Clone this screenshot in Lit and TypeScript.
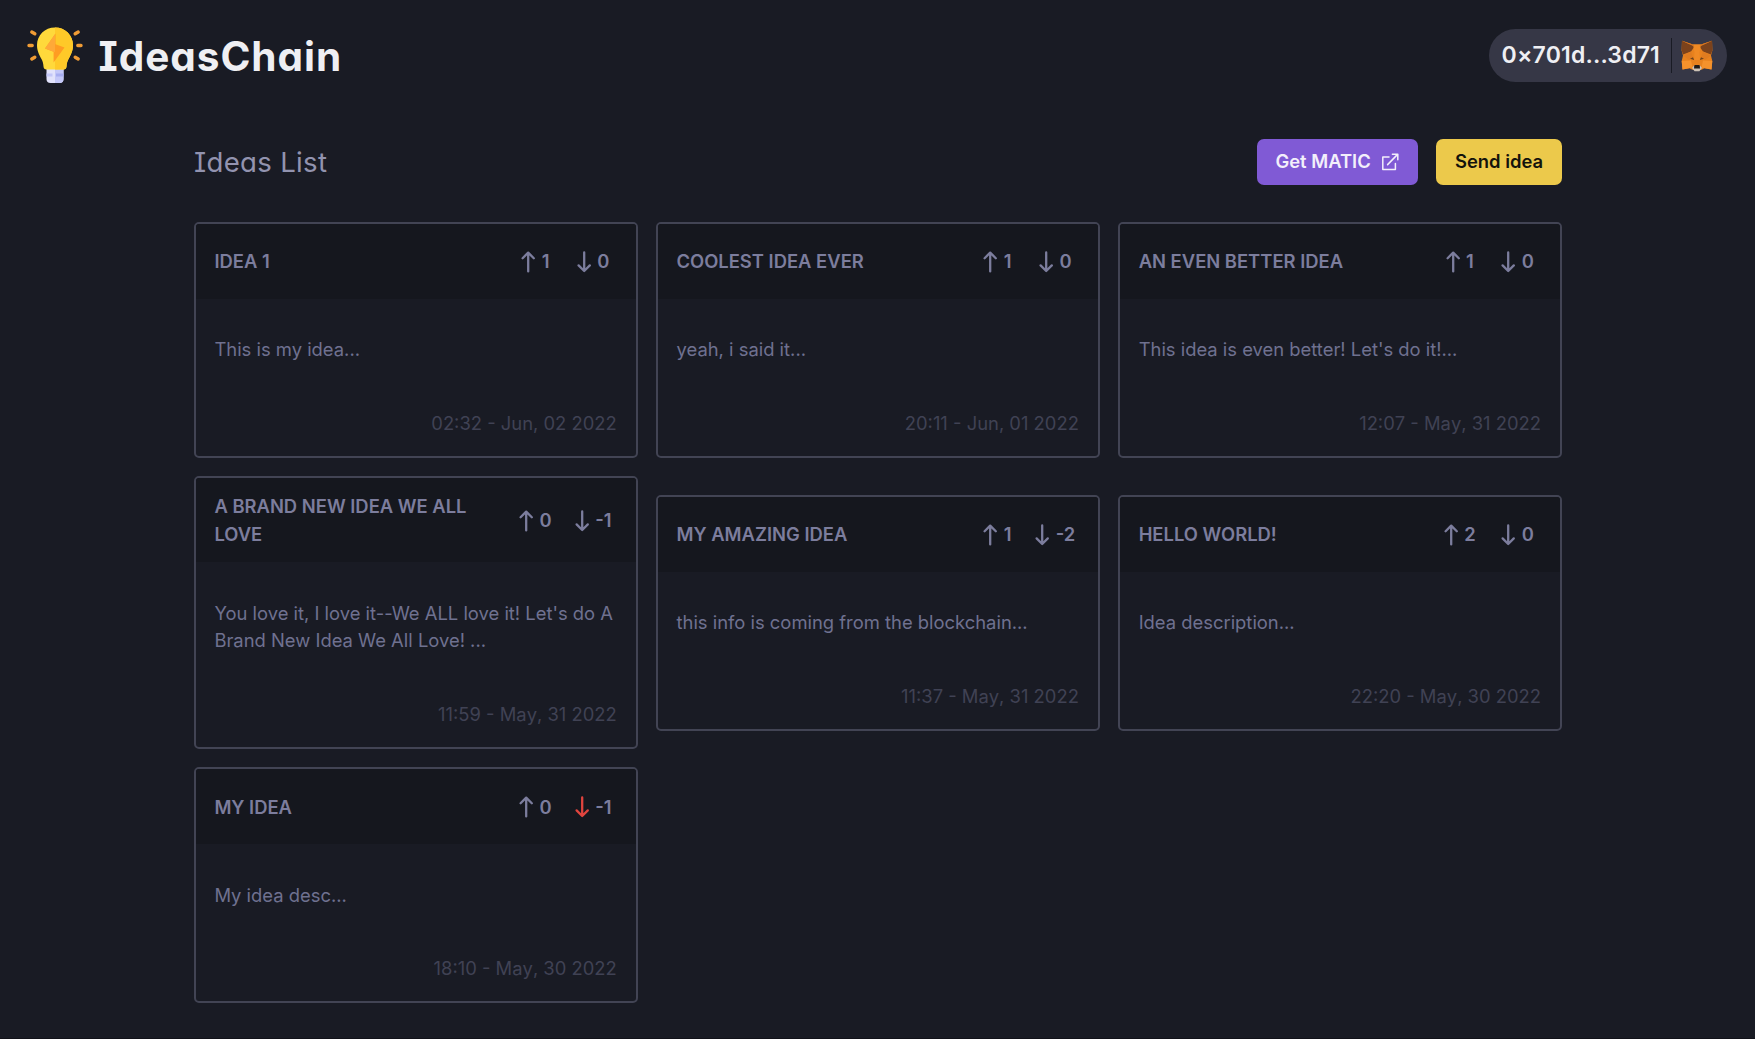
import { LitElement, html, css, svg } from "lit";
import { customElement, property } from "lit/decorators.js";
import { classMap } from "lit/directives/class-map.js";

interface Idea {
  title: string;
  text: string;
  up: number;
  down: number;
  date: string;
  downvoted?: boolean;
}

const IDEAS: Idea[] = [
  { title: "Idea 1", text: "This is my idea...", up: 1, down: 0, date: "02:32 - Jun, 02 2022" },
  { title: "Coolest idea ever", text: "yeah, i said it...", up: 1, down: 0, date: "20:11 - Jun, 01 2022" },
  { title: "An even better idea", text: "This idea is even better! Let's do it!...", up: 1, down: 0, date: "12:07 - May, 31 2022" },
  { title: "A brand new idea we all love", text: "You love it, I love it--We ALL love it! Let's do A Brand New Idea We All Love! ...", up: 0, down: -1, date: "11:59 - May, 31 2022" },
  { title: "My amazing idea", text: "this info is coming from the blockchain...", up: 1, down: -2, date: "11:37 - May, 31 2022" },
  { title: "Hello world!", text: "Idea description...", up: 2, down: 0, date: "22:20 - May, 30 2022" },
  { title: "My idea", text: "My idea desc...", up: 0, down: -1, date: "18:10 - May, 30 2022", downvoted: true },
];

const arrow = (d: string) => svg`<path d=${d} fill="none" stroke="currentColor" stroke-width="2.3" stroke-linecap="round" stroke-linejoin="round"/>`;
const ARROW_UP = "M9.2 20.4V1.8M3.6 7.2L9.2 1.600L14.800 7.200";
const ARROW_DOWN = "M9.200 1.400V19.800M3.600 14.400L9.200 20L14.800 14.400";

@customElement("idea-card")
export class IdeaCard extends LitElement {
  @property({ attribute: false }) idea!: Idea;

  static styles = css`
    :host { display: block; box-sizing: border-box; border: 2px solid #424454; border-radius: 5px; overflow: hidden; }
    .head { display: flex; align-items: center; justify-content: space-between; box-sizing: border-box;
      padding: 15px 20.5px 14px 18.4px; background: #15171e; color: #7c7d9d; font-weight: 560; }
    .title { flex: 1; text-transform: uppercase; }
    .votes { display: flex; gap: 11.8px; }
    .vote { display: flex; align-items: center; justify-content: center; gap: 4px; width: 46px; height: 46px; }
    .vote svg { flex: none; width: 18.4px; height: 22px; }
    .active svg { color: #e0443e; }
    .text { padding: 37.3px 18.4px 0; color: #6f7190; }
    .date { padding: 46px 19px 18.4px; text-align: right; color: #404254; font-kerning: none; }
  `;

  render() {
    const { title, text, up, down, date, downvoted } = this.idea;
    return html`
      <div class="head">
        <div class="title">${title}</div>
        <div class="votes">
          <div class="vote"><svg viewBox="0 0 18.4 22">${arrow(ARROW_UP)}</svg><span>${up}</span></div>
          <div class=${classMap({ vote: true, active: !!downvoted })}>
            <svg viewBox="0 0 18.4 22">${arrow(ARROW_DOWN)}</svg><span>${down}</span>
          </div>
        </div>
      </div>
      <div class="text">${text}</div>
      <div class="date">${date}</div>
    `;
  }
}

@customElement("app-root")
export class AppRoot extends LitElement {
  static styles = css`
    :host { display: block; box-sizing: border-box; min-height: 1039px; background: #191b24; overflow: hidden;
      border-bottom: 1px solid #111219; font: 400 18.4px/27.6px Inter, "Liberation Sans", sans-serif; }
    .top { display: flex; align-items: center; justify-content: space-between; padding: 27.5px 28px 0 27px; height: 56px; }
    .brand { display: flex; align-items: center; gap: 15.5px; }
    .brand svg { width: 56px; height: 57px; }
    .name { padding-top: 2.5px; font-size: 40.5px; line-height: 56px; font-weight: 700; letter-spacing: 0.95px; color: #efeff3;
      font-feature-settings: "cv08", "cv11"; }
    .wallet { display: flex; align-items: center; box-sizing: border-box; height: 53px; padding: 0 14px 0 13px;
      border-radius: 27px; background: #363746; color: #efeff3; font-size: 23px; font-weight: 600; }
    .addr { letter-spacing: 0.17px; }
    .sep { width: 1px; height: 35px; margin: 0 9.5px 0 10.5px; background: #191b24; }
    .wallet svg { width: 32px; height: 32px; margin-top: 1px; }
    .main { width: 1368px; margin: 0 auto; padding: 55px 0 0 1px; }
    .bar { display: flex; align-items: center; gap: 18.4px; height: 46px; }
    .heading { flex: 1; font-size: 27.6px; line-height: 46px; letter-spacing: 0.3px; color: #9293af;
      font-feature-settings: "cv08", "cv11"; }
    .btn { display: flex; align-items: center; gap: 10px; height: 46px; padding: 0 18.4px; border-radius: 7px;
      font-weight: 600; color: #f3effb; background: #805ad5; }
    .btn svg { width: 18px; height: 18px; margin-right: 0.8px; }
    .yellow { padding: 0 18.9px 0 18.7px; background: #ecc94b; color: #14130c; }
    .grid { display: grid; grid-template-columns: repeat(3, 1fr); gap: 18.4px; align-items: center; padding-top: 37.5px; }
  `;

  render() {
    return html`
      <header class="top">
        <div class="brand">
          <svg viewBox="0 0 56 57">
            <g stroke="#f09c35" stroke-width="3.4" stroke-linecap="round">
              <path d="M2 18.500h3.200M50.800 18.500h3.200M4.800 5l3 1.800M51.200 5l-3 1.800M4.800 32l3-1.800M51.200 32l-3-1.800"/>
            </g>
            <path d="M19.500 42h17v10q0 4-4 4h-9q-4 0-4-4z" fill="#e1e2fb"/>
            <path d="M28 42h8.500v10q0 4-4 4H28z" fill="#c3c7f8"/>
            <path d="M19.500 46.500h6v3h-6z" fill="#c3c7f8"/><path d="M29 46.500h7.500v3H29z" fill="#a7adf0"/>
            <path d="M28 .5C17.800 .5 10 8.300 10 18c0 6 2.300 10 4.600 14.300 1.300 2.500 1.700 4.500 1.900 7.200.1 2 1.200 3 3 3h17c1.800 0 2.900-1 3-3 .2-2.700.6-4.700 1.900-7.200C43.700 28 46 24 46 18 46 8.300 38.200.5 28 .5z" fill="#ffd93b"/>
            <path d="M28 .5v42h8.500c1.800 0 2.900-1 3-3 .2-2.700.6-4.700 1.900-7.200C43.700 28 46 24 46 18 46 8.300 38.200.5 28 .5z" fill="#ffc928"/>
            <path d="M28.500 6.500L18 21.500l8.600 3.300V35.500L37.500 20.500l-9-3.300z" fill="#ff9c22"/>
            <path d="M28.500 6.500L18 21.500l10 3.700V7z" fill="#ffa938"/>
          </svg>
          <div class="name">IdeasChain</div>
        </div>
        <div class="wallet">
          <span class="addr">0×701d...3d71</span>
          <span class="sep"></span>
          <svg viewBox="0 0 32 32">
            <path d="M1 .8L12 4.600h8L31 .8l.4 9.700L30 15.500l1.300 5.500-.8 8.500-7-1.200-3.500 1.700h-8l-3.500-1.700-7 1.200L.7 21 2 15.500 .6 10.500z" fill="#e8821e"/>
            <path d="M1 .8L13.500 6.500 10 11.500 2 14.500.6 10z" fill="#7b421c"/><path d="M31 .8L18.500 6.500 22 11.500l8 3 1.400-4.500z" fill="#7b421c"/>
            <path d="M12 4.600h8L18.500 12l.5 8h-6l.5-8z" fill="#f08a24"/>
            <path d="M1 .8L12 4.600l1.500 2zM31 .8L20 4.600l-1.500 2z" fill="#d9741c"/>
            <path d="M.7 21l9.300-.6 1.500 7-10 2.100zM31.300 21l-9.300-.6-1.500 7 10 2.100z" fill="#f5922c"/>
            <path d="M2 15.500l8-4 2 6-4 2.500zM30 15.500l-8-4-2 6 4 2.500z" fill="#e07c20"/>
            <path d="M9 18.800l3-1.500 1.200 2.600zM23 18.800l-3-1.500-1.200 2.600z" fill="#6d421c"/>
            <path d="M11 28l2-2.600h6l2 2.600-2.600 3.200h-4.800z" fill="#cdc2b6"/>
            <path d="M13.200 25.800l.5-.7h4.600l.5.700.2 2.700h-6z" fill="#211a16"/>
          </svg>
        </div>
      </header>
      <main class="main">
        <div class="bar">
          <div class="heading">Ideas List</div>
          <div class="btn"><span>Get MATIC</span>
            <svg viewBox="0 0 18 18" fill="none" stroke="currentColor" stroke-width="1.500" stroke-linecap="round" stroke-linejoin="round">
              <path d="M8 4H1.800v12.600h12.600V10.500M6.600 11.600L16.600 1.400M11.400 1.300h5.400v5.400"/>
            </svg>
          </div>
          <div class="btn yellow">Send idea</div>
        </div>
        <section class="grid">${IDEAS.map((i) => html`<idea-card .idea=${i}></idea-card>`)}</section>
      </main>
    `;
  }
}
